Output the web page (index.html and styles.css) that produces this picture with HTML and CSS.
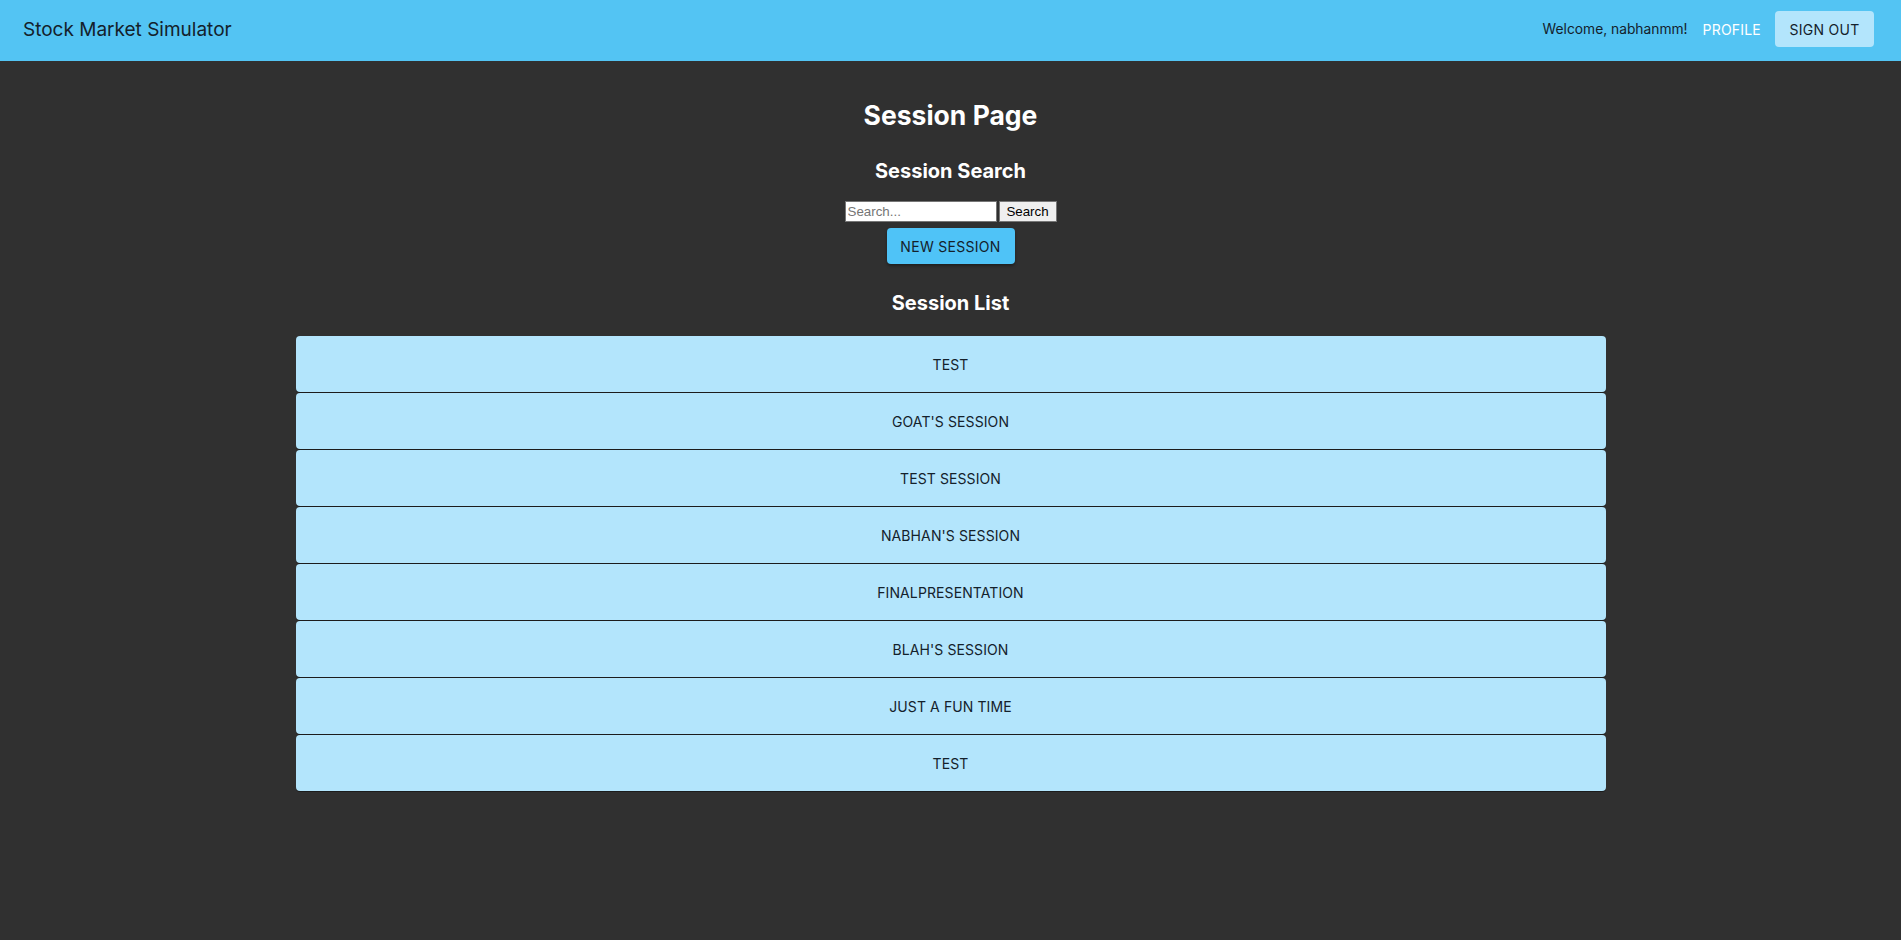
FILE: index.html
```html
<!DOCTYPE html>
<html lang="en">
<head>
<meta charset="utf-8">
<title>Stock Market Simulator</title>
<link rel="stylesheet" href="styles.css">
</head>
<body>
<header class="topbar">
  <div class="brand">Stock Market Simulator</div>
  <nav class="nav">
    <span class="welcome">Welcome, nabhanmm!</span>
    <a class="nav-link" href="#">PROFILE</a>
    <button class="signout">SIGN OUT</button>
  </nav>
</header>
<main class="page">
  <h1 class="page-title">Session Page</h1>
  <h2 class="section-title">Session Search</h2>
  <form class="search">
    <input class="search-input" type="text" placeholder="Search...">
    <button class="search-btn" type="button">Search</button>
  </form>
  <button class="new-session">NEW SESSION</button>
  <h2 class="section-title list-title">Session List</h2>
  <div class="session-list">
    <div class="session">TEST</div>
    <div class="session">GOAT'S SESSION</div>
    <div class="session">TEST SESSION</div>
    <div class="session">NABHAN'S SESSION</div>
    <div class="session">FINALPRESENTATION</div>
    <div class="session">BLAH'S SESSION</div>
    <div class="session">JUST A FUN TIME</div>
    <div class="session">TEST</div>
  </div>
</main>
</body>
</html>
```
FILE: styles.css
```css
html, body {
  margin: 0;
  padding: 0;
  background: #303030;
  font-family: Inter, "Noto Sans", sans-serif;
  min-height: 100%;
}
body { min-height: 940px; }

.topbar {
  height: 61px;
  box-sizing: border-box;
  padding: 0 27px 3px 23px;
  background: #53c4f3;
  display: flex;
  align-items: center;
  justify-content: space-between;
}
.brand {
  font-size: 19px;
  color: #14212b;
}
.nav {
  display: flex;
  align-items: center;
}
.welcome {
  font-size: 13.8px;
  color: #14212b;
}
.nav-link {
  margin-left: 15px;
  font-size: 14px;
  color: #ffffff;
  text-decoration: none;
  letter-spacing: 0.2px;
}
.signout {
  margin-left: 14px;
  height: 36px;
  width: 99px;
  border: none;
  border-radius: 4px;
  background: #b3e5fc;
  color: #14212b;
  font-family: inherit;
  font-size: 14px;
  letter-spacing: 0.3px;
  padding: 0;
}

.page {
  display: flex;
  flex-direction: column;
  align-items: center;
  color: #ffffff;
}
.page-title {
  margin: 37px 0 0;
  font-size: 26.5px;
  font-weight: 700;
  line-height: 34px;
}
.section-title {
  margin: 26px 0 0;
  font-size: 20px;
  font-weight: 700;
  line-height: 26px;
}
.search {
  margin: 17px 0 0;
  display: flex;
}
.search-input {
  box-sizing: border-box;
  width: 152px;
  height: 21px;
  margin: 0 2px 0 0;
  padding: 1px 2px;
  border: 1px solid #767676;
  background: #fff;
  font-family: "Liberation Sans", Arial, sans-serif;
  font-size: 13.33px;
}
.search-input::placeholder { color: #757575; }
.search-btn {
  box-sizing: border-box;
  width: 58px;
  height: 21px;
  padding: 0;
  border: 1px solid #767676;
  background: #efefef;
  color: #000;
  font-family: "Liberation Sans", Arial, sans-serif;
  font-size: 13.33px;
  font-weight: 400;
}
.new-session {
  margin-top: 6px;
  width: 128px;
  height: 36px;
  border: none;
  border-radius: 4px;
  background: #4fc3f7;
  color: #14212b;
  font-family: inherit;
  font-size: 14px;
  letter-spacing: 0.3px;
  padding: 0;
  box-shadow: 0 2px 3px rgba(0,0,0,0.35);
}
.list-title { margin-top: 26px; }

.session-list {
  margin-top: 20px;
  width: 1310px;
  display: flex;
  flex-direction: column;
  gap: 1px;
}
.session {
  height: 56px;
  display: flex;
  align-items: center;
  justify-content: center;
  background: #b3e5fc;
  border-radius: 4px;
  color: #14212b;
  font-size: 14px;
  letter-spacing: 0.1px;
  box-shadow: 0 1px 0 #1c1c1c;
}
```
